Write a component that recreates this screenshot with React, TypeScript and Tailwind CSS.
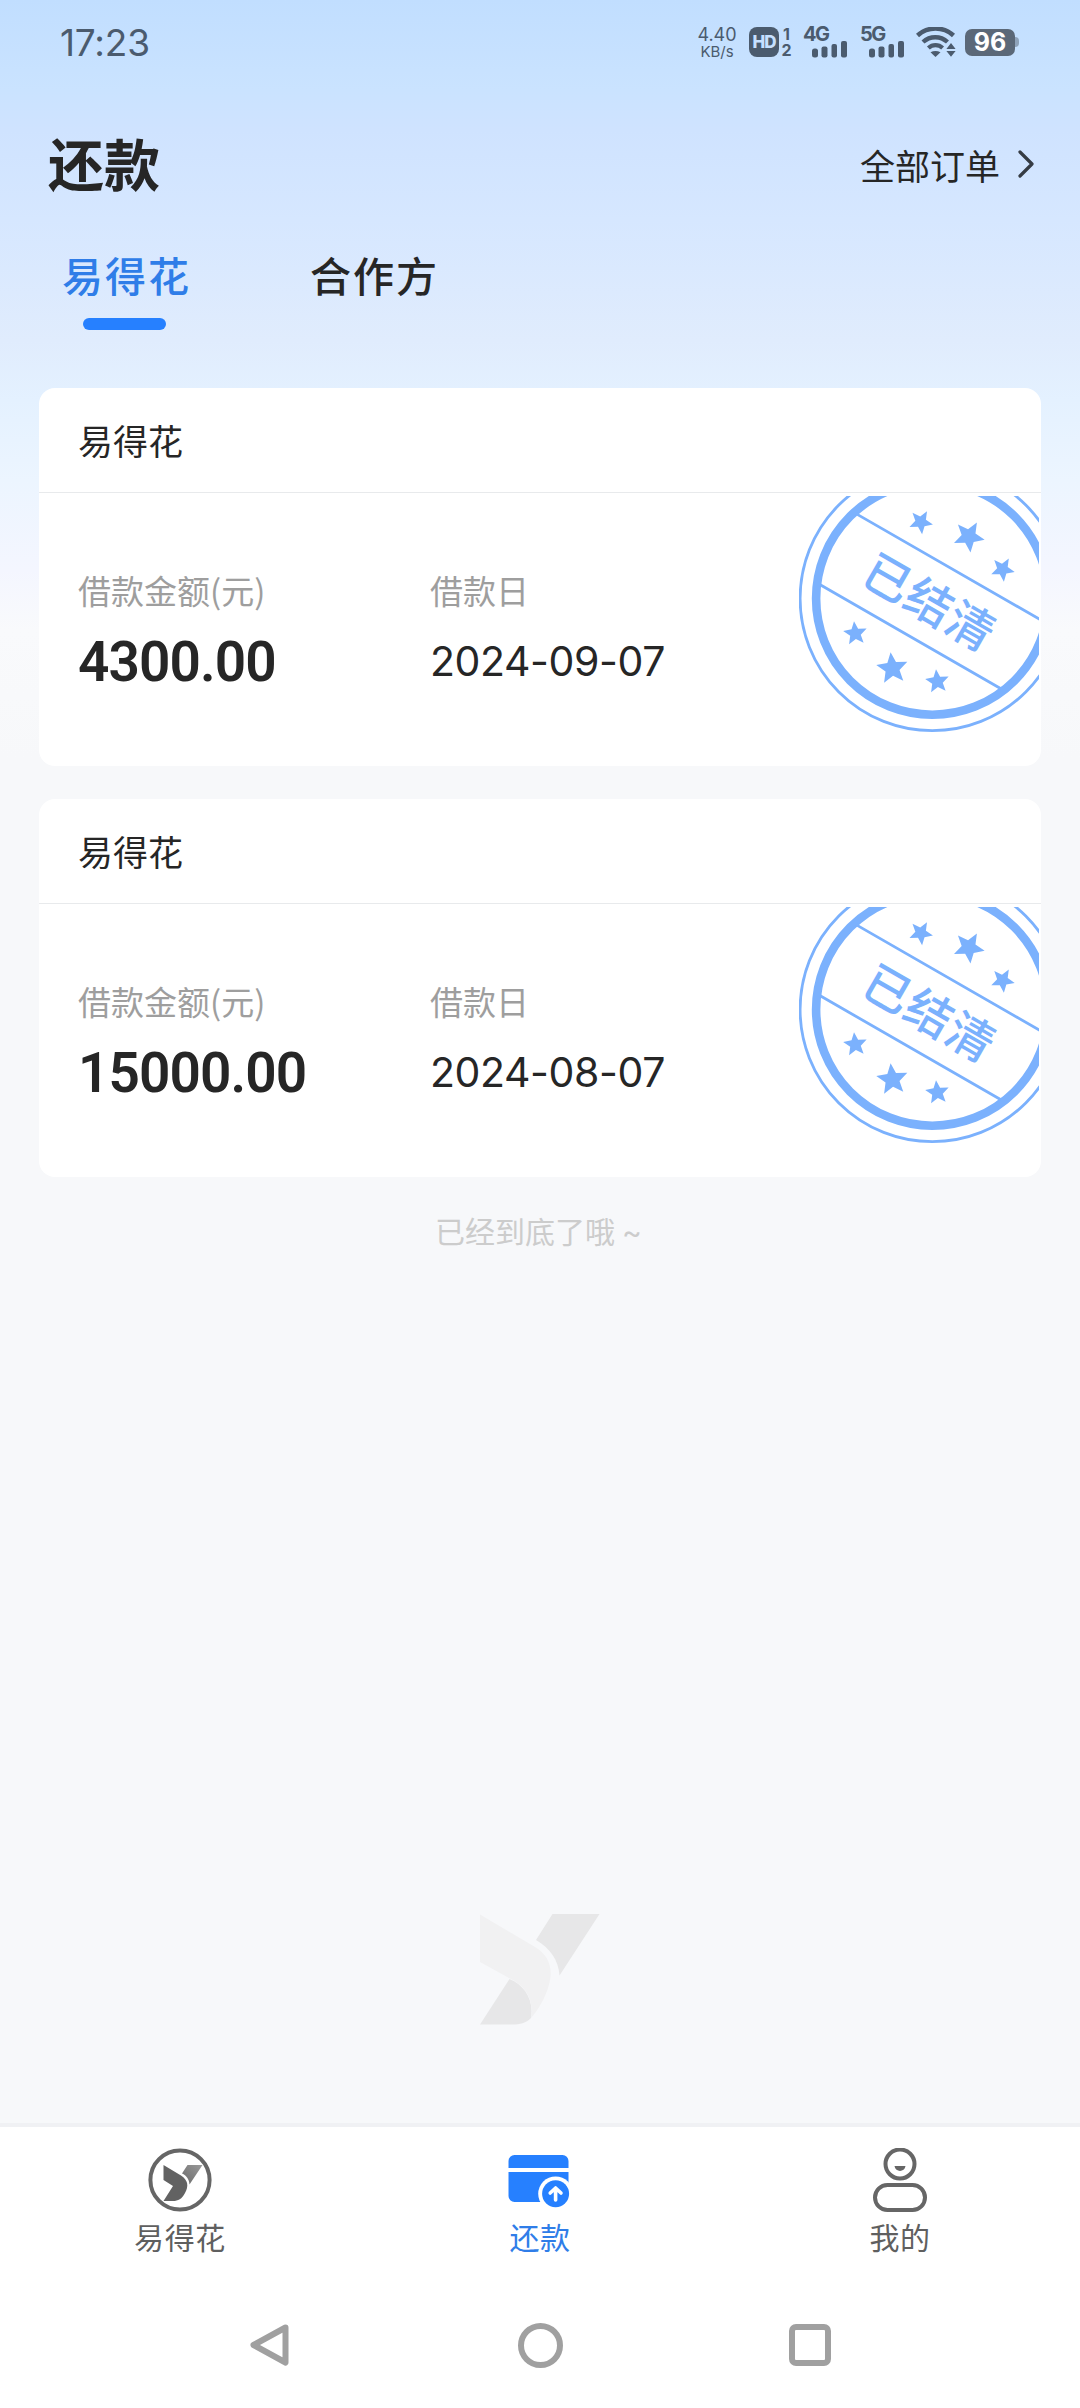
import type { ReactNode } from "react";

type Loan = {
  id: string;
  product: string;
  amount: string;
  date: string;
};

const loans: Loan[] = [
  { id: "loan-1", product: "易得花", amount: "4300.00", date: "2024-09-07" },
  { id: "loan-2", product: "易得花", amount: "15000.00", date: "2024-08-07" },
];

const STAR =
  "M0 -1L.265 -.364L.951 -.309L.428 .139L.588 .809L0 .45L-.588 .809L-.428 .139L-.951 -.309L-.265 -.364Z";

const stars = [
  { x: -11.5, y: -76.5, size: 12.4, rotate: 30 },
  { x: 36.5, y: -62, size: 16.2, rotate: 30 },
  { x: 70.3, y: -29.2, size: 12.4, rotate: 30 },
  { x: -77, y: 35, size: 12.4, rotate: -6 },
  { x: -40, y: 70, size: 16.4, rotate: -6 },
  { x: 5, y: 83, size: 12.4, rotate: -6 },
];

function SignalBars() {
  return (
    <svg width="36" height="17" viewBox="0 0 36 17" fill="#4b5b6e">
      <rect x="0" y="7.5" width="6" height="9" rx="2.5" />
      <rect x="9.5" y="5.5" width="6" height="11" rx="2" />
      <rect x="19.5" y="3" width="5.5" height="13.5" rx="2" />
      <rect x="29" y="0" width="6" height="16.5" rx="2" />
    </svg>
  );
}

function Signal({ label }: { label: string }) {
  return (
    <div className="flex h-[30px] w-[45px] flex-col">
      <span className="h-[14px] text-[20px] leading-[14px] font-bold tracking-[-1.5px]">
        {label}
      </span>
      <div className="ml-[9px]">
        <SignalBars />
      </div>
    </div>
  );
}

function StatusBar() {
  return (
    <div className="flex h-[84px] items-center justify-between pr-[61px] pl-[60px] font-['Inter','Noto_Sans_CJK_SC',sans-serif] text-[#4b5b6e]">
      <span className="text-[37px] leading-none tracking-[-0.2px]">17:23</span>
      <div className="flex items-center">
        <div className="flex w-[40px] flex-col items-center text-center">
          <span className="text-[18px] leading-[18px]">4.40</span>
          <span className="text-[15px] leading-[15px]">KB/s</span>
        </div>
        <div className="ml-[12px] flex h-[30px] w-[30px] items-center justify-center rounded-[8px] bg-[#4b5b6e]">
          <span className="text-[17px] leading-none font-extrabold tracking-[-1px] text-[#c6e0ff]">
            HD
          </span>
        </div>
        <div className="ml-[2px] flex h-[32px] w-[11px] flex-col items-center text-[16px] leading-[16px] font-bold">
          <span>1</span>
          <span>2</span>
        </div>
        <div className="ml-[11px]">
          <Signal label="4G" />
        </div>
        <div className="ml-[12px]">
          <Signal label="5G" />
        </div>
        <svg className="ml-[11px]" width="40" height="30" viewBox="0 0 40 30" fill="none">
          <path d="M1.5 8.5C12 -.8 27 -.8 37.5 8.5" stroke="#4b5b6e" strokeWidth="4.6" />
          <path d="M7 15C14 8.6 24.5 8.6 31.5 15" stroke="#4b5b6e" strokeWidth="4.4" />
          <path d="M12.4 21C16.5 17.2 22.5 17.2 26.6 21" stroke="#4b5b6e" strokeWidth="4.2" />
          <path d="M14.5 25.2Q19.5 22.6 24.5 25.2L19.5 30Z" fill="#4b5b6e" />
          <path d="M35 16L39.6 22H30.4ZM35 29.8L39.6 24H30.4Z" fill="#4b5b6e" />
        </svg>
        <div className="ml-[9px] flex items-center">
          <div className="flex h-[27px] w-[50px] items-center justify-center rounded-[7px] bg-[#5b6878] text-[25px] leading-none font-bold text-white">
            96
          </div>
          <div className="h-[10px] w-[4px] rounded-r-full bg-[#8fa3ba]" />
        </div>
      </div>
    </div>
  );
}

function SettledStamp() {
  return (
    <svg
      className="absolute top-0 right-[2px]"
      width="240"
      height="240"
      viewBox="0 0 240 240"
      fill="none"
    >
      <g transform="translate(133.3 102.5)">
        <circle r="132.2" stroke="#7bb1fd" strokeWidth="2.8" />
        <circle r="116.2" stroke="#7bb1fd" strokeWidth="8.6" />
        <g transform="rotate(29.9)">
          <path d="M-108 -35.5H108M-105 44H105" stroke="#7bb1fd" strokeWidth="2.8" />
          <text
            x="-0.5"
            y="22"
            textAnchor="middle"
            fill="#7bb1fd"
            className="font-['Noto_Sans_CJK_SC',sans-serif] text-[47px] font-medium tracking-[0.8px]"
          >
            已结清
          </text>
        </g>
        {stars.map((star) => (
          <path
            key={`${star.x}-${star.y}`}
            d={STAR}
            fill="#7bb1fd"
            transform={`translate(${star.x} ${star.y}) rotate(${star.rotate}) scale(${star.size})`}
          />
        ))}
      </g>
    </svg>
  );
}

function LoanCard({ loan }: { loan: Loan }) {
  return (
    <article className="h-[378px] overflow-hidden rounded-[16px] bg-white">
      <div className="flex h-[105px] items-center border-b border-[#e8eaec] pb-[2px] pl-[39px]">
        <h2 className="text-[35px] leading-none text-[#262626]">{loan.product}</h2>
      </div>
      <div className="relative mt-[3px] h-[270px] overflow-hidden pl-[39px]">
        <div className="flex pt-[75px]">
          <div className="w-[352px]">
            <p className="h-[38px] text-[33px] leading-[38px] text-[#9e9e9e]">借款金额(元)</p>
            <p className="mt-[23px] h-[60px] font-['Roboto',sans-serif] text-[55px] leading-[60px] font-semibold tracking-[-0.9px] text-[#262626]">
              {loan.amount}
            </p>
          </div>
          <div>
            <p className="h-[38px] text-[33px] leading-[38px] text-[#9e9e9e]">借款日</p>
            <p className="mt-[22px] h-[60px] font-['Inter',sans-serif] text-[41px] leading-[60px] tracking-[-0.4px] text-[#262626]">
              {loan.date}
            </p>
          </div>
        </div>
        <SettledStamp />
      </div>
    </article>
  );
}

function Watermark() {
  return (
    <svg width="120" height="116" viewBox="0 0 120 116">
      <path d="M72.5 2H119.5L79.5 63.5C78.5 48 70 36 56 28Z" fill="#e7e7e8" />
      <path d="M0 112.5L29.5 67C44 73 54 87 51 106C46 111 40 112.5 32 112.5Z" fill="#e7e7e8" />
      <path
        d="M0 2.5L55 35C70 44 74 58 68 76C64 88 58 98 51 106C54 88 46 74 29 66L0 50Z"
        fill="#f1f1f2"
      />
    </svg>
  );
}

function HomeIcon() {
  return (
    <svg width="64" height="64" viewBox="0 0 64 64">
      <defs>
        <linearGradient id="wing" x1="0" y1="1" x2="1" y2="0">
          <stop offset="0" stopColor="#6a6a6a" />
          <stop offset="1" stopColor="#9a9a9a" />
        </linearGradient>
      </defs>
      <circle cx="32" cy="32" r="29.6" fill="none" stroke="#666" strokeWidth="4" />
      <path d="M39.5 17H54.5L41.5 36.5C41 31 38.5 27.5 34 25.5Z" fill="url(#wing)" />
      <path d="M15.5 17L33 27.5C40 32 41 38 37 45C34 51 30 53 25 53H15.5L25 38L15.5 32Z" fill="#626262" />
    </svg>
  );
}

function RepayIcon() {
  return (
    <svg width="64" height="64" viewBox="0 0 64 64">
      <path d="M.5 20V13A6 6 0 0 1 6.5 7H54.5A6 6 0 0 1 60.5 13V20Z" fill="#2680ff" />
      <path d="M.5 24H60.5V48A6 6 0 0 1 54.5 54H6.5A6 6 0 0 1 .5 48Z" fill="#2680ff" />
      <circle cx="47.6" cy="45.8" r="17.4" fill="#fff" />
      <circle cx="47.6" cy="45.8" r="13.5" fill="#2680ff" />
      <path
        d="M47.6 52V41M42.2 45L47.6 40L53 45"
        fill="none"
        stroke="#fff"
        strokeWidth="3.6"
        strokeLinecap="round"
        strokeLinejoin="round"
      />
    </svg>
  );
}

function MineIcon() {
  return (
    <svg width="64" height="64" viewBox="0 0 64 64" fill="none" stroke="#666" strokeWidth="4">
      <circle cx="32" cy="16" r="14.5" />
      <path d="M26.5 18H37.5C36.5 24.5 27.5 24.5 26.5 18Z" fill="#666" stroke="none" />
      <rect x="7" y="37" width="50" height="25" rx="12.5" />
    </svg>
  );
}

function NavItem({ icon, label, active }: { icon: ReactNode; label: string; active?: boolean }) {
  return (
    <div className="flex flex-col items-center pt-[21px]">
      {icon}
      <span
        className={`mt-[6px] text-[30px] leading-[36px] tracking-[0.6px] ${
          active ? "text-[#2f7de8]" : "text-[#5f5f5f]"
        }`}
      >
        {label}
      </span>
    </div>
  );
}

function SystemNav() {
  return (
    <div className="grid h-[126px] grid-cols-3 items-center px-[135px]">
      <svg className="mx-auto" width="44" height="46" viewBox="0 0 44 46" fill="none">
        <path d="M37.5 5.5L5.5 23L37.5 40.5Z" stroke="#a0a0a0" strokeWidth="6" strokeLinejoin="round" />
      </svg>
      <div className="mx-auto h-[45px] w-[45px] rounded-full border-6 border-[#a0a0a0]" />
      <div className="mx-auto h-[42px] w-[42px] rounded-[7px] border-6 border-[#a0a0a0]" />
    </div>
  );
}

export default function App() {
  return (
    <div className="flex h-[2408px] w-[1080px] flex-col overflow-hidden bg-[#f7f8fa] bg-[linear-gradient(180deg,#c1deff_0px,#cae3ff_90px,#cfe3ff_130px,#d6e7ff_220px,#e0ecfd_340px,#e4f1ff_400px,#ecf5ff_480px,#f4f6ff_570px,#f9fafc_630px,#f7f8fa_760px)] font-['Noto_Sans_CJK_SC',sans-serif]">
      <StatusBar />

      {/* 标题 */}
      <header className="flex h-[160px] items-center justify-between pr-[46px] pl-[48px]">
        <h1 className="pb-[4px] text-[56px] leading-none font-bold text-[#262626]">还款</h1>
        <div className="flex items-center text-[#262626]">
          <span className="text-[35px] leading-none">全部订单</span>
          <svg className="ml-[18px]" width="16" height="28" viewBox="0 0 16 28" fill="none">
            <path
              d="M2 2L14 14L2 26"
              stroke="#363c44"
              strokeWidth="3.2"
              strokeLinecap="round"
              strokeLinejoin="round"
            />
          </svg>
        </div>
      </header>

      {/* 标签页 */}
      <nav className="flex h-[144px] gap-[119px] pl-[62px] text-[41px] font-medium tracking-[2px]">
        <div className="flex flex-col items-center">
          <span className="leading-[60px] text-[#2f7de8]">易得花</span>
          <span className="mt-[14px] mr-[4px] h-[12px] w-[83px] rounded-full bg-[#2680ff]" />
        </div>
        <span className="leading-[60px] text-[#262626]">合作方</span>
      </nav>

      <main className="flex flex-1 flex-col px-[39px]">
        <div className="flex flex-col gap-[33px]">
          {loans.map((loan) => (
            <LoanCard key={loan.id} loan={loan} />
          ))}
        </div>
        <p className="mt-[33px] pr-[3px] text-center text-[30px] leading-[40px] text-[#cccccc]">
          已经到底了哦
          <span className="ml-[7px] font-['Inter',sans-serif] text-[30px]">~</span>
        </p>
        <div className="mt-auto mb-[95px] flex justify-center">
          <Watermark />
        </div>
      </main>

      {/* 底部导航 */}
      <footer className="border-t-4 border-[#f0f1f4] bg-white">
        <div className="grid h-[155px] grid-cols-3">
          <NavItem icon={<HomeIcon />} label="易得花" />
          <NavItem icon={<RepayIcon />} label="还款" active />
          <NavItem icon={<MineIcon />} label="我的" />
        </div>
        <SystemNav />
      </footer>
    </div>
  );
}
